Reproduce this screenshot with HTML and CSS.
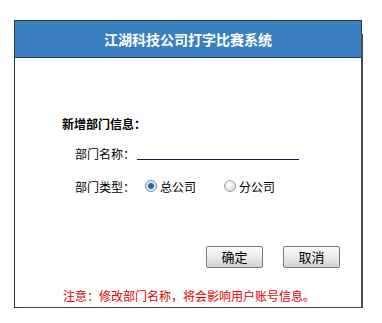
FILE: index.html
```html
<!DOCTYPE html>
<html lang="zh">
<head>
<meta charset="utf-8">
<link rel="stylesheet" href="styles.css">
</head>
<body>
<div class="dialog">
  <div class="dialog-header">江湖科技公司打字比赛系统</div>
  <div class="dialog-body">
    <div class="section-title">新增部门信息：</div>
    <div class="form-row">
      <span class="label">部门名称：</span>
      <span class="line-input"></span>
    </div>
    <div class="form-row row-type">
      <span class="label">部门类型：</span>
      <label class="option"><span class="radio checked"></span>总公司</label>
      <label class="option option-2"><span class="radio"></span>分公司</label>
    </div>
    <div class="actions">
      <button class="btn">确定</button>
      <button class="btn">取消</button>
    </div>
    <div class="note">注意：修改部门名称，将会影响用户账号信息。</div>
  </div>
</div>
</body>
</html>
```
FILE: styles.css
```css
html, body {
  margin: 0;
  padding: 0;
  background: #fff;
}
body {
  font-family: "Noto Sans CJK SC", "Noto Sans", sans-serif;
  font-size: 12px;
  color: #000;
}
.dialog {
  position: relative;
  margin: 20px 0 0 14px;
  width: 346px;
  border: 1px solid #22384e;
  background: #fff;
}
.dialog::after {
  content: "";
  position: absolute;
  left: 100%;
  top: 13px;
  bottom: -3px;
  width: 2px;
  background: #4a4a4a;
}
.dialog::before {
  content: "";
  position: absolute;
  top: 100%;
  left: 4px;
  right: -1px;
  height: 2px;
  background: #4a4a4a;
}
.dialog-header {
  height: 36px;
  line-height: 36px;
  background: #3a80c0;
  border-bottom: 1px solid #1f3a55;
  color: #fff;
  font-weight: bold;
  font-size: 14px;
  text-align: center;
}
.dialog-body {
  padding: 58px 21px 3px 47px;
}
.section-title {
  font-weight: bold;
  line-height: 16px;
}
.form-row {
  display: flex;
  align-items: center;
  height: 20px;
  padding-left: 13px;
  margin-top: 11px;
}
.row-type {
  margin-top: 13px;
}
.label {
  width: 62px;
}
.line-input {
  width: 162px;
  height: 14px;
  border-bottom: 1px solid #1a1a5a;
  margin-top: -2px;
}
.option {
  display: flex;
  align-items: center;
  margin-left: 8px;
}
.option-2 {
  margin-left: 28px;
}
.radio {
  width: 10px;
  height: 10px;
  border-radius: 50%;
  border: 1px solid #9aa0a6;
  background: radial-gradient(circle at 40% 35%, #fff 0%, #e4e4e4 60%, #c8c8c8 100%);
  margin-right: 3px;
}
.radio.checked {
  border-color: #6f8fb0;
  background: radial-gradient(circle at 50% 50%, #1f5e8e 0, #2a6fa2 2.5px, #d8e6f2 3.5px, #eef4fa 100%);
}
.actions {
  display: flex;
  justify-content: flex-end;
  gap: 20px;
  margin-top: 50px;
}
.btn {
  width: 57px;
  height: 22px;
  padding: 0;
  border: 1px solid #7a7a7a;
  border-radius: 2px;
  background: linear-gradient(#fdfdfd, #e6e6e6 60%, #d2d2d2);
  font-family: "Noto Sans CJK SC", sans-serif;
  font-size: 13px;
  color: #000;
  line-height: 20px;
}
.note {
  margin-top: 20px;
  margin-left: 1px;
  line-height: 16px;
  color: #e00000;
}
```
